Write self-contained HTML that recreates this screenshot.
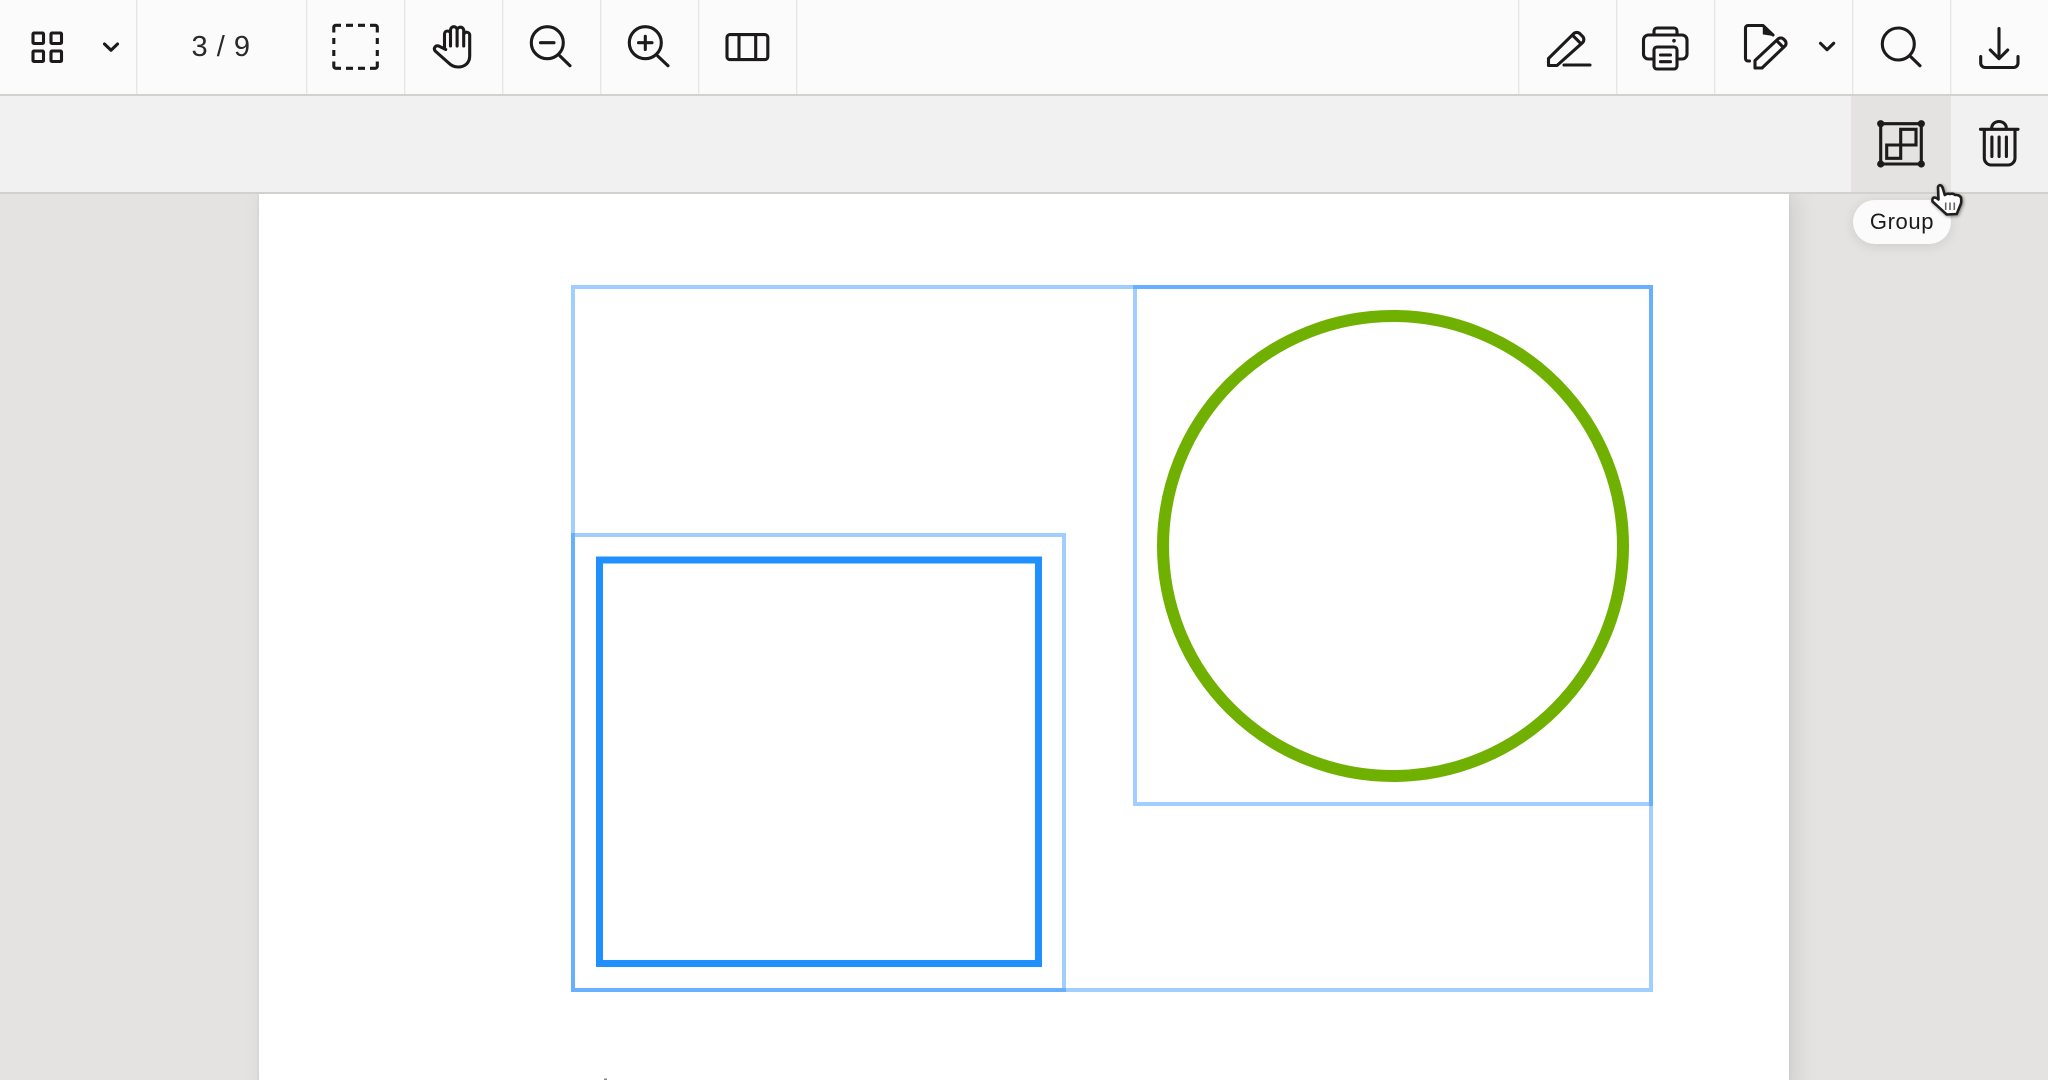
<!DOCTYPE html>
<html lang="en">
<head>
<meta charset="utf-8">
<title>Group</title>
<style>
html,body{margin:0;padding:0;width:2048px;height:1080px;overflow:hidden;background:#e4e3e1}
#root{position:relative;width:2048px;height:1080px;overflow:hidden;font-family:"Liberation Sans",sans-serif}
.abs{position:absolute}
#page{left:259px;top:194px;width:1530px;height:900px;background:#fff;box-shadow:6px 0 22px rgba(0,0,0,.10),0 0 3px rgba(0,0,0,.08)}
#row1{left:0;top:0;width:2048px;height:94px;background:#fbfbfb;border-bottom:2px solid #d2d1cc}
#row2{left:0;top:96px;width:2048px;height:96px;background:#f1f1f1;border-bottom:2px solid #d2d1cc}
#hover{left:1851px;top:96px;width:100px;height:96px;background:#e4e3e1}
#pageno{left:136px;top:26px;width:170px;text-align:center;font-size:29px;line-height:42px;letter-spacing:.5px;color:#2b2929}
#tip{left:1853px;top:200px;width:98px;height:44px;border-radius:22px;background:#fbfbfb;box-shadow:0 2px 12px rgba(0,0,0,.10);text-align:center;font-size:22px;line-height:43px;letter-spacing:.6px;color:#1c1a1a}
svg{position:absolute;left:0;top:0}
.i{fill:none;stroke:#1c1a1a;stroke-width:3.1;stroke-linecap:round;stroke-linejoin:round;filter:blur(.3px)}
.b{fill:none;stroke:#1a85ff;stroke-width:4;stroke-opacity:.41}
</style>
</head>
<body>
<div id="root">
<div class="abs" id="page"></div>
<svg width="2048" height="1080" viewBox="0 0 2048 1080">
  <rect class="b" x="573" y="287" width="1078" height="703"/>
  <rect class="b" x="573" y="535" width="491" height="455"/>
  <rect class="b" x="1135" y="287" width="516" height="517"/>
  <rect x="599.5" y="560" width="439" height="403.5" fill="none" stroke="#2090ff" stroke-width="7"/>
  <circle cx="1393" cy="546" r="230" fill="none" stroke="#6fb000" stroke-width="12"/>
  <rect x="604" y="1078.5" width="3" height="1.5" fill="#8a8a8a"/>
</svg>
<div class="abs" id="row1"></div>
<div class="abs" id="row2"></div>
<div class="abs" id="hover"></div>
<div class="abs" id="pageno">3 / 9</div>
<div class="abs" id="tip">Group</div>
<svg width="2048" height="1080" viewBox="0 0 2048 1080">
  <g fill="#e6e6e4">
    <rect x="136" y="0" width="1.4" height="94"/><rect x="306" y="0" width="1.4" height="94"/>
    <rect x="404" y="0" width="1.4" height="94"/><rect x="502" y="0" width="1.4" height="94"/>
    <rect x="600" y="0" width="1.4" height="94"/><rect x="698" y="0" width="1.4" height="94"/>
    <rect x="796" y="0" width="1.4" height="94"/><rect x="1518" y="0" width="1.4" height="94"/>
    <rect x="1616" y="0" width="1.4" height="94"/><rect x="1714" y="0" width="1.4" height="94"/>
    <rect x="1852" y="0" width="1.4" height="94"/><rect x="1950" y="0" width="1.4" height="94"/>
  </g>
  <g class="i">
    <!-- grid -->
    <rect x="33" y="33" width="10.5" height="10.5" rx="1"/><rect x="51" y="33" width="10.5" height="10.5" rx="1"/>
    <rect x="33" y="51" width="10.5" height="10.5" rx="1"/><rect x="51" y="51" width="10.5" height="10.5" rx="1"/>
    <path d="M104.5 44 L111 50.3 L117.5 44"/>
    <!-- dashed select -->
    <path stroke-linecap="butt" d="M333.8 32.5 V27.3 a2 2 0 0 1 2-2 H341 M346 25.3 H353 M358 25.3 H365 M370 25.3 H375.3 a2 2 0 0 1 2 2 V32.5 M377.3 38 V44 M377.3 50 V56 M377.3 61.5 V66.3 a2 2 0 0 1-2 2 H370 M365 68.3 H358 M353 68.3 H346 M341 68.3 H335.8 a2 2 0 0 1-2-2 V61.5 M333.8 56 V50 M333.8 44 V38"/>
    <!-- hand -->
    <path d="M444.5 48 V34 a3 3 0 0 1 6 0 V46 M450.5 33 V30 a3.3 3.3 0 0 1 6.6 0 V46 M457.1 30 a3.3 3.3 0 0 1 6.6 1 V46 M463.7 35 a3 3 0 0 1 6 0.5 V56 c0 7-5 11-11.5 11 c-4 0-7-1.5-9.5-4 l-13.5-12 c-2-2.5 0-6 3.5-5 l7 3.5"/>
    <!-- zoom out -->
    <circle cx="547.3" cy="42.7" r="16"/><path d="M560 56 L570 65.7 M540.5 42.7 H554"/>
    <!-- zoom in -->
    <circle cx="645.3" cy="42.7" r="16"/><path d="M657.7 56 L668 65.7 M638.5 42.7 H652 M645.3 36.3 V49.5"/>
    <!-- columns -->
    <rect x="727" y="34.6" width="40.8" height="25" rx="3"/><path d="M739 35 V59 M755.7 35 V59"/>
    <!-- pen -->
    <path d="M1548.5 65.5 V58.5 L1573.5 33.8 a4.5 4.5 0 0 1 6.5 0 l2.5 2.5 a4.5 4.5 0 0 1 0 6.4 L1557 65.5 Z M1573.3 36 L1580 42.7 M1564 65 H1590"/>
    <!-- printer -->
    <path d="M1653 59 H1648.5 a5 5 0 0 1-5-5 V40 a5 5 0 0 1 5-5 H1682 a5 5 0 0 1 5 5 V54 a5 5 0 0 1-5 5 H1678 M1654 34 V31 a3 3 0 0 1 3-3 H1674 a3 3 0 0 1 3 3 V34"/>
    <rect x="1654" y="47" width="23" height="22" rx="3"/>
    <path d="M1660.5 55 H1670.5 M1660.5 61.7 H1670.5"/>
    <!-- doc edit -->
    <path d="M1749.5 61 H1748 a2.5 2.5 0 0 1-2.5-2.5 V28 a2.5 2.5 0 0 1 2.5-2.5 H1763 L1773 35"/>
    <path d="M1755 68 V60.5 L1778 39 a4 4 0 0 1 5.5 0 l1.5 1.5 a4 4 0 0 1 0 5.5 L1762 68 Z M1776.5 40.5 L1783.5 47.5"/>
    <path d="M1820.5 43.3 L1827 49.7 L1833.7 43.3"/>
    <!-- search -->
    <circle cx="1898.3" cy="44" r="16"/><path d="M1910 56 L1920 65.7"/>
    <!-- download -->
    <path d="M1999 28.5 V58.5 M1990.3 50 L1999 58.7 L2007.7 50 M1980.7 56.5 V63 a4.5 4.5 0 0 0 4.5 4.5 H2013.5 a4.5 4.5 0 0 0 4.5-4.5 V56.5"/>
    <!-- group -->
    <rect x="1880.7" y="123.7" width="40.6" height="40.3"/>
    <path stroke-linejoin="miter" d="M1886.7 145 H1900.7 V129.3 H1916 V145 H1900.7 V158.3 H1886.7 Z"/>
    <!-- trash -->
    <path d="M1980.5 129.3 H2018 M1991.7 129 v-1 a7.3 6.5 0 0 1 14.6 0 v1 M1984.3 130 V158 a7 7 0 0 0 7 7 H2008 a7 7 0 0 0 7-7 V130 M1991.9 137 V156.5 M1999.1 137 V156.5 M2006.4 137 V156.5"/>
  </g>
  <path d="M1763.3 25 V34 L1773.5 35.5 Z" fill="#1c1a1a" stroke="#1c1a1a" stroke-width="1" stroke-linejoin="round"/>
  <circle cx="1674" cy="40.7" r="1.8" fill="#1c1a1a"/>
  <g fill="#1c1a1a">
    <circle cx="1880.7" cy="123.7" r="3.6"/><circle cx="1921.3" cy="123.7" r="3.6"/>
    <circle cx="1880.7" cy="164" r="3.6"/><circle cx="1921.3" cy="164" r="3.6"/>
  </g>
  <!-- cursor -->
  <g style="filter:drop-shadow(1px 1.5px 1.5px rgba(0,0,0,.45))">
    <path d="M1938 187 Q1939 184.5 1941 185.5 Q1942.5 186.5 1943 189 L1944.8 195 Q1947.5 193 1950 194 Q1953 193 1955 195 Q1959 194.5 1961 197.5 Q1961.5 201 1961 203.5 L1956.7 214 L1946.7 214.5 L1940 208.3 L1932.5 201.5 Q1932 198 1934 197.5 Q1936.5 197.5 1938.5 199.5 Z" fill="#fff" stroke="#1f1f1f" stroke-width="2.6" stroke-linejoin="round"/>
    <path d="M1945.7 202.5 V210 M1950 202.5 V210 M1954.3 202.5 V210" stroke="#666" stroke-width="1.6" fill="none"/>
  </g>
</svg>
</div>
</body>
</html>
